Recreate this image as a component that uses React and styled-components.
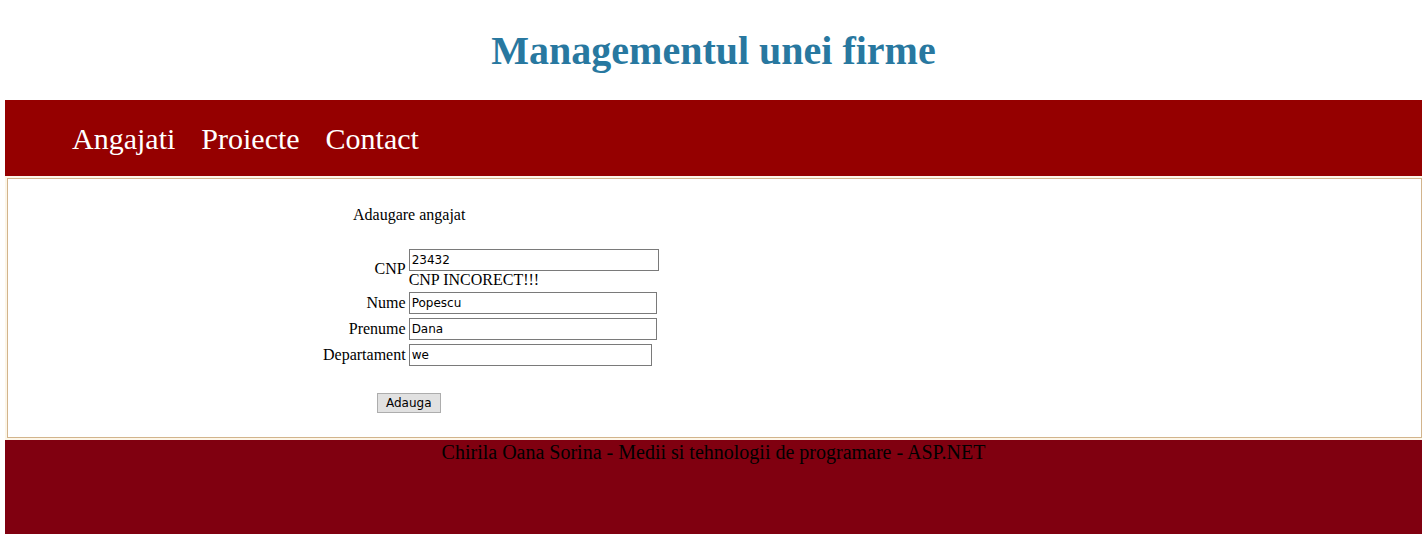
import React from "react";
import styled, { createGlobalStyle } from "styled-components";

const GlobalStyle = createGlobalStyle`
  html, body {
    margin: 0;
    padding: 0;
    background: #ffffff;
  }
  body {
    font-family: "Liberation Serif", "Times New Roman", serif;
    overflow: hidden;
  }
`;

const Page = styled.div`
  padding-left: 5px;
  width: 1417px;
`;

const Header = styled.header`
  height: 100px;
  display: flex;
  justify-content: center;
  align-items: flex-start;
  background: #ffffff;
`;

const Title = styled.h1`
  margin: 0;
  padding-top: 28px;
  font-size: 40px;
  font-weight: 700;
  line-height: 46px;
  color: #2878a0;
`;

const Nav = styled.nav`
  height: 76px;
  background: #950000;
  display: flex;
  align-items: center;
  gap: 26px;
  padding-left: 67px;
`;

const NavLink = styled.a`
  color: #ffffff;
  font-size: 30px;
  text-decoration: none;
  line-height: 34px;
  padding-top: 2px;
`;

const Content = styled.main`
  background: #fdf6e8;
  padding: 2px 0 0 2px;
  height: 264px;
  box-sizing: border-box;
`;

const Inner = styled.div`
  background: #ffffff;
  border: 1px solid #d2b48c;
  height: 260px;
  box-sizing: border-box;
  padding-top: 27px;
`;

const FormTitle = styled.div`
  font-size: 16px;
  color: #000;
  padding-left: 345px;
  line-height: 18px;
`;

const FormGrid = styled.div`
  display: grid;
  grid-template-columns: auto auto;
  justify-content: start;
  column-gap: 3px;
  row-gap: 4px;
  margin-top: 25px;
  padding-left: 315px;
  align-items: center;
`;

const Label = styled.label`
  font-size: 16px;
  text-align: right;
  color: #000;
`;

const Field = styled.div`
  display: flex;
  flex-direction: column;
`;

const Input = styled.input`
  width: ${({ $w }) => $w}px;
  height: 22px;
  box-sizing: border-box;
  border: 1px solid #7a7a7a;
  padding: 1px 2px;
  font-family: "DejaVu Sans", "Liberation Sans", sans-serif;
  font-size: 12px;
  color: #000;
  margin: 0;
  outline: none;
`;

const Error = styled.span`
  font-size: 16px;
  line-height: 17px;
  color: #000;
`;

const Button = styled.button`
  margin: 27px 0 0 369px;
  height: 20px;
  padding: 0 8px;
  font-family: "DejaVu Sans", "Liberation Sans", sans-serif;
  font-size: 12px;
  background: #e1e1e1;
  border: 1px solid #adadad;
  color: #000;
`;

const Footer = styled.footer`
  height: 94px;
  background: #800010;
  text-align: center;
  font-size: 20px;
  color: #000;
  padding-top: 1px;
  box-sizing: border-box;
`;

const fields = [
  { label: "CNP", value: "23432", w: 250, error: "CNP INCORECT!!!" },
  { label: "Nume", value: "Popescu", w: 248 },
  { label: "Prenume", value: "Dana", w: 248 },
  { label: "Departament", value: "we", w: 243 },
];

export default function App() {
  return (
    <Page>
      <GlobalStyle />
      <Header>
        <Title>Managementul unei firme</Title>
      </Header>
      <Nav>
        <NavLink href="#">Angajati</NavLink>
        <NavLink href="#">Proiecte</NavLink>
        <NavLink href="#">Contact</NavLink>
      </Nav>
      <Content>
        <Inner>
          <FormTitle>Adaugare angajat</FormTitle>
          <FormGrid>
            {fields.map((f) => (
              <React.Fragment key={f.label}>
                <Label>{f.label}</Label>
                <Field>
                  <Input $w={f.w} defaultValue={f.value} />
                  {f.error && <Error>{f.error}</Error>}
                </Field>
              </React.Fragment>
            ))}
          </FormGrid>
          <Button>Adauga</Button>
        </Inner>
      </Content>
      <Footer>Chirila Oana Sorina - Medii si tehnologii de programare - ASP.NET</Footer>
    </Page>
  );
}
